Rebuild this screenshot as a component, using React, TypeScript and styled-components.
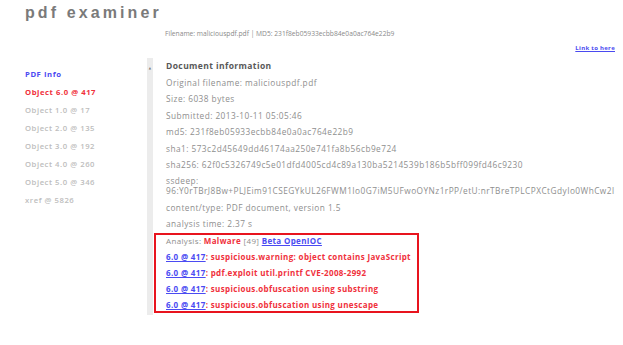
import { createGlobalStyle, styled } from "styled-components";

const GlobalStyle = createGlobalStyle`
  html, body {
    margin: 0;
    padding: 0;
    background: #ffffff;
    overflow: hidden;
  }
  body {
    font-family: "Open Sans", "DejaVu Sans", sans-serif;
  }
`;

const fileInfo = [
  "Original filename: maliciouspdf.pdf",
  "Size: 6038 bytes",
  "Submitted: 2013-10-11 05:05:46",
  "md5: 231f8eb05933ecbb84e0a0ac764e22b9",
  "sha1: 573c2d45649dd46174aa250e741fa8b56cb9e724",
  "sha256: 62f0c5326749c5e01dfd4005cd4c89a130ba5214539b186b5bff099fd46c9230",
];

const objects = [
  "Object 1.0 @ 17",
  "Object 2.0 @ 135",
  "Object 3.0 @ 192",
  "Object 4.0 @ 260",
  "Object 5.0 @ 346",
  "xref @ 5826",
];

const findings = [
  "suspicious.warning: object contains JavaScript",
  "pdf.exploit util.printf CVE-2008-2992",
  "suspicious.obfuscation using substring",
  "suspicious.obfuscation using unescape",
];

export default function App() {
  return (
    <Page>
      <GlobalStyle />
      <Header>
        <Title>pdf examiner</Title>
        <SubTitle>
          Filename: maliciouspdf.pdf | MD5: 231f8eb05933ecbb84e0a0ac764e22b9
        </SubTitle>
        <LinkRow>
          <SmallLink href="#">Link to here</SmallLink>
        </LinkRow>
      </Header>
      <Body>
        <Sidebar>
          <NavItem $tone="blue">PDF Info</NavItem>
          <NavItem $tone="red">Object 6.0 @ 417</NavItem>
          {objects.map((o) => (
            <NavItem key={o} $tone="grey">
              {o}
            </NavItem>
          ))}
        </Sidebar>
        <Panel>
          <Strip>
            <Arrow>▲</Arrow>
          </Strip>
          <Content>
            <Heading>Document information</Heading>
            {fileInfo.map((line) => (
              <Row key={line}>{line}</Row>
            ))}
            <Row>
              ssdeep:
              <br />
              96:Y0rTBrJ8Bw+PLJEim91CSEGYkUL26FWM1Io0G7iM5UFwoOYNz1rPP/etU:nrTBreTPLCPXCtGdyIo0WhCw2l
            </Row>
            <Row>content/type: PDF document, version 1.5</Row>
            <Row>analysis time: 2.37 s</Row>
            <Alert>
              <AlertRow>
                Analysis: <Bad>Malware</Bad> [49] <BlueLink href="#">Beta OpenIOC</BlueLink>
              </AlertRow>
              {findings.map((f) => (
                <AlertRow key={f}>
                  <BlueLink href="#">6.0 @ 417</BlueLink>
                  <Bad>: {f}</Bad>
                </AlertRow>
              ))}
            </Alert>
          </Content>
        </Panel>
      </Body>
    </Page>
  );
}

const Page = styled.div`
  width: 623px;
  height: 345px;
  overflow: hidden;
  background: #ffffff;
`;

const Header = styled.div`
  display: flex;
  flex-direction: column;
  padding: 5px 0 0 25px;
`;

const Title = styled.div`
  font-family: "Liberation Sans", Arial, sans-serif;
  font-weight: bold;
  font-size: 16px;
  line-height: 16px;
  letter-spacing: 3.1px;
  color: #7a7a7a;
`;

const SubTitle = styled.div`
  margin: 9px 0 0 140px;
  font-size: 6.7px;
  line-height: 8px;
  color: #8a8a8a;
  white-space: nowrap;
`;

const LinkRow = styled.div`
  display: flex;
  justify-content: flex-end;
  padding-right: 8px;
  margin-top: 6px;
`;

const SmallLink = styled.a`
  font-size: 6px;
  line-height: 8px;
  font-weight: bold;
  color: #4a4af0;
  letter-spacing: 0.3px;
`;

const Body = styled.div`
  display: flex;
  margin-top: 6px;
`;

const Sidebar = styled.div`
  width: 122px;
  flex-shrink: 0;
  padding: 11px 0 0 25px;
  display: flex;
  flex-direction: column;
`;

const toneColor = {
  blue: "#4b4bf2",
  red: "#f0313c",
  grey: "#bdbdbd",
};

const NavItem = styled.div<{ $tone: "blue" | "red" | "grey" }>`
  font-size: 7.7px;
  line-height: 10px;
  height: 18px;
  font-weight: ${(p) => (p.$tone === "grey" ? 600 : 700)};
  letter-spacing: 0.55px;
  color: ${(p) => toneColor[p.$tone]};
  white-space: nowrap;
`;

const Panel = styled.div`
  display: flex;
  flex: 1;
  min-width: 0;
  overflow: hidden;
`;

const Strip = styled.div`
  width: 6px;
  flex-shrink: 0;
  height: 257px;
  background: #ececec;
  display: flex;
  justify-content: center;
  padding-top: 8px;
  box-sizing: border-box;
`;

const Arrow = styled.div`
  font-size: 3px;
  line-height: 4px;
  color: #777777;
`;

const Content = styled.div`
  display: flex;
  flex-direction: column;
  flex-shrink: 0;
  padding-left: 1px;
  white-space: nowrap;
`;

const Heading = styled.div`
  padding-left: 12px;
  font-size: 8.5px;
  line-height: 10px;
  font-weight: 700;
  color: #585858;
  letter-spacing: 0.4px;
  margin: 3px 0 7px;
`;

const Row = styled.div`
  padding-left: 12px;
  font-size: 8.3px;
  line-height: 10px;
  color: #8e8e8e;
  letter-spacing: 0.45px;
  margin-bottom: 6.4px;
`;

const Alert = styled.div`
  width: 265px;
  border: 2px solid #e8141e;
  margin-top: -3px;
  padding: 1px 0 0 10px;
  box-sizing: border-box;
  height: 80px;
  display: flex;
  flex-direction: column;
  gap: 6.2px;
`;

const AlertRow = styled.div`
  font-size: 8px;
  line-height: 10px;
  color: #8e8e8e;
  letter-spacing: 0.35px;
`;

const Bad = styled.span`
  color: #f0313c;
  font-weight: 700;
`;

const BlueLink = styled.a`
  color: #4b4bf2;
  font-weight: 700;
  text-decoration: underline;
`;
